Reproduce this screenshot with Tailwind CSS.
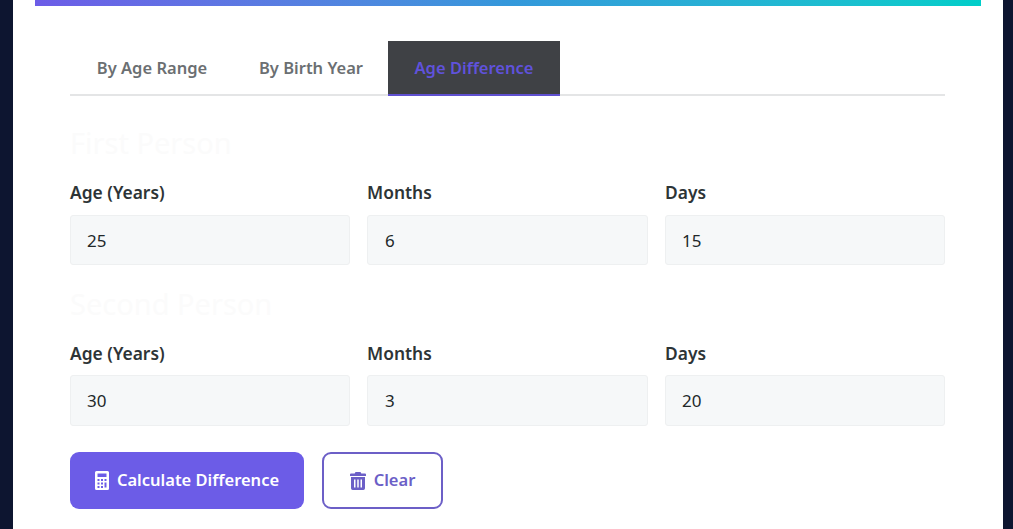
<!DOCTYPE html>
<html lang="en">
<head>
    <meta charset="UTF-8">
    <meta name="viewport" content="width=device-width, initial-scale=1.0">
    <title>Age Difference</title>
    <script src="https://cdn.jsdelivr.net/npm/@tailwindcss/browser@4"></script>
</head>
<body class="bg-[#0d1530] font-['Noto_Sans',sans-serif] h-[529px] overflow-hidden">
    <div class="ml-[13px] mr-[10px] h-[529px] bg-white px-[22px]">
        <div class="h-[6px] bg-gradient-to-r from-[#6c5ce7] via-[#3498db] to-[#00cec9]"></div>
        <div class="pl-[35px] pr-[36px] pt-[35px]">
            <!-- tabs -->
            <div class="flex h-[55px] border-b-2 border-[#e4e5e6] text-[16.5px] font-semibold text-[#6b6f72]">
                <div class="h-[55px] w-[164px] text-center leading-[53px]">By Age Range</div>
                <div class="h-[55px] w-[154px] text-center leading-[53px]">By Birth Year</div>
                <div class="h-[55px] w-[172px] text-center leading-[53px] bg-[#3f4145] text-[#6052dc] border-b-2 border-[#5f50d0]">Age Difference</div>
            </div>

            <h2 class="mt-[27px] h-[40px] text-[29px] leading-[40px] font-normal text-[#fbfbfb]">First Person</h2>
            <div class="mt-[18px] grid grid-cols-[280px_281px_280px] gap-x-[17px]">
                <div>
                    <label class="block h-[24px] text-[17.4px] leading-[22px] font-semibold text-[#2d3436]">Age (Years)</label>
                    <input type="text" value="25" class="mt-[10px] block h-[50px] w-full rounded-[3px] border border-[#eef0f1] bg-[#f6f8f9] px-[16px] text-[17px] text-[#22282a]">
                </div>
                <div>
                    <label class="block h-[24px] text-[17.4px] leading-[22px] font-semibold text-[#2d3436]">Months</label>
                    <input type="text" value="6" class="mt-[10px] block h-[50px] w-full rounded-[3px] border border-[#eef0f1] bg-[#f6f8f9] px-[17px] text-[17px] text-[#22282a]">
                </div>
                <div>
                    <label class="block h-[24px] text-[17.4px] leading-[22px] font-semibold text-[#2d3436]">Days</label>
                    <input type="text" value="15" class="mt-[10px] block h-[50px] w-full rounded-[3px] border border-[#eef0f1] bg-[#f6f8f9] px-[16px] text-[17px] text-[#22282a]">
                </div>
            </div>

            <h2 class="mt-[19px] h-[40px] text-[29px] leading-[40px] font-normal text-[#fbfbfb]">Second Person</h2>
            <div class="mt-[18px] grid grid-cols-[280px_281px_280px] gap-x-[17px]">
                <div>
                    <label class="block h-[24px] text-[17.4px] leading-[22px] font-semibold text-[#2d3436]">Age (Years)</label>
                    <input type="text" value="30" class="mt-[9px] block h-[51px] w-full rounded-[3px] border border-[#eef0f1] bg-[#f6f8f9] px-[16px] text-[17px] text-[#22282a]">
                </div>
                <div>
                    <label class="block h-[24px] text-[17.4px] leading-[22px] font-semibold text-[#2d3436]">Months</label>
                    <input type="text" value="3" class="mt-[9px] block h-[51px] w-full rounded-[3px] border border-[#eef0f1] bg-[#f6f8f9] px-[17px] text-[17px] text-[#22282a]">
                </div>
                <div>
                    <label class="block h-[24px] text-[17.4px] leading-[22px] font-semibold text-[#2d3436]">Days</label>
                    <input type="text" value="20" class="mt-[9px] block h-[51px] w-full rounded-[3px] border border-[#eef0f1] bg-[#f6f8f9] px-[16px] text-[17px] text-[#22282a]">
                </div>
            </div>

            <!-- buttons -->
            <div class="mt-[26px] flex gap-[18px]">
                <button class="flex h-[57px] w-[234px] items-center justify-center gap-[8px] rounded-[9px] bg-[#6c5ce7] text-[16.5px] font-semibold text-white">
                    <svg class="h-[19px] w-[14px]" viewBox="0 0 14 19" fill="currentColor" fill-rule="evenodd"><path d="M1.500 0h11A1.500 1.500 0 0 1 14 1.500v16a1.500 1.500 0 0 1-1.500 1.500h-11A1.500 1.500 0 0 1 0 17.500v-16A1.500 1.500 0 0 1 1.500 0zM2.500 2.500v3.500h9V2.500zM2.500 8v2h2V8zM6 8v2h2V8zM9.500 8v2h2V8zM2.500 11.500v2h2v-2zM6 11.500v2h2v-2zM9.500 11.500v5h2v-5zM2.500 15v2h2v-2zM6 15v2h2v-2z"/></svg>
                    Calculate Difference
                </button>
                <button class="flex h-[57px] w-[121px] items-center justify-center gap-[8px] rounded-[9px] border-2 border-[#6c5fc7] bg-white text-[16.5px] font-semibold text-[#6c5fc7]">
                    <svg class="h-[18px] w-[16px]" viewBox="0 0 16 18" fill="currentColor" fill-rule="evenodd"><path d="M5.500 0h5l.8 1.500H15a1 1 0 0 1 1 1V4H0V2.500a1 1 0 0 1 1-1h3.700zM1 5h14v11.300a1.700 1.700 0 0 1-1.700 1.700H2.700A1.700 1.700 0 0 1 1 16.300zM4 7.500v8h1.500v-8zM7.250 7.500v8h1.500v-8zM10.500 7.500v8H12v-8z"/></svg>
                    Clear
                </button>
            </div>
        </div>
    </div>
</body>
</html>
